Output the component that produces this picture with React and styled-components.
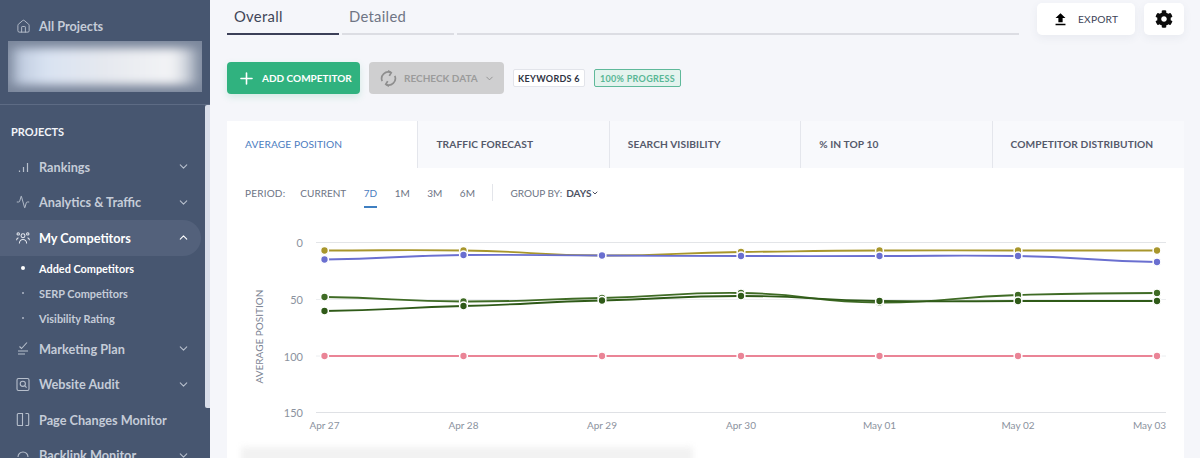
import React from 'react'
import styled, { createGlobalStyle } from 'styled-components'
import { House, Activity, ChevronDown, ChevronUp, Plus } from 'lucide-react'
import { MdFileUpload } from 'react-icons/md'
import { FaCog } from 'react-icons/fa'

const GlobalStyle = createGlobalStyle`
  html, body {
    margin: 0;
    height: 458px;
    overflow: hidden;
    background: #f5f6fa;
    font-family: Lato, "Open Sans", sans-serif;
  }
  * { box-sizing: border-box; }
`

const Page = styled.div`
  display: flex;
  width: 1200px;
  height: 458px;
  overflow: hidden;
`

const Sidebar = styled.aside`
  position: relative;
  flex: 0 0 210px;
  height: 458px;
  overflow: hidden;
  background: #475670;
  color: #c5ccd8;
`

const SideTop = styled.div`
  height: 105px;
  padding: 17px 8px 0;
  border-bottom: 1px solid #5d6b84;
`

const AllProjects = styled.div`
  display: flex;
  align-items: center;
  gap: 8px;
  height: 18px;
  padding-left: 8px;
  font-size: 12.7px;
  font-weight: 700;
`

const BlurWrap = styled.div`
  height: 51px;
  margin-top: 6px;
  overflow: hidden;
  background: #7b879c;
`

const BlurBar = styled.div`
  width: 100%;
  height: 100%;
  background: linear-gradient(90deg, #bcc8dc 0%, #d9e3f2 18%, #e6e9ef 50%, #f3f4f6 88%, #a9b2c1 100%);
  filter: blur(7px);
  transform: scale(0.94, 0.72);
`

const SectionTitle = styled.div`
  padding: 20px 0 0 11px;
  height: 44px;
  font-size: 11px;
  font-weight: 700;
  line-height: 13px;
  color: #f2f4f8;
`

const NavItem = styled.div`
  display: flex;
  align-items: center;
  width: 201px;
  height: 35.6px;
  padding-left: 16px;
  padding-right: 11px;
  font-size: 12.7px;
  font-weight: 700;
  color: ${({ $active }) => ($active ? '#ffffff' : '#c5ccd8')};
  background: ${({ $active }) => ($active ? '#53617b' : 'transparent')};
  border-radius: ${({ $active }) => ($active ? '0 18px 18px 0' : '0')};
`

const NavIcon = styled.span`
  display: flex;
  justify-content: center;
  width: 14px;
  margin-right: 9px;
`

const NavLabel = styled.span`
  flex: 1;
`

const SubItem = styled.div`
  display: flex;
  align-items: center;
  height: 25px;
  padding-left: 21px;
  font-size: 10.9px;
  font-weight: 700;
  color: ${({ $active }) => ($active ? '#ffffff' : '#c5ccd8')};
`

const Dot = styled.span`
  flex: 0 0 auto;
  width: ${({ $active }) => ($active ? '4px' : '2px')};
  height: ${({ $active }) => ($active ? '4px' : '2px')};
  margin-left: ${({ $active }) => ($active ? '0' : '1px')};
  margin-right: ${({ $active }) => ($active ? '14px' : '15px')};
  border-radius: 50%;
  background: ${({ $active }) => ($active ? '#ffffff' : '#aeb7c6')};
`

const Scrollbar = styled.div`
  position: absolute;
  top: 105px;
  left: 205px;
  width: 5px;
  height: 303px;
  background: #d9deea;
  border-radius: 2px 0 0 2px;
`

const Main = styled.main`
  flex: 1;
  display: flex;
  flex-direction: column;
  padding-left: 17px;
  padding-right: 16px;
`

const TopRow = styled.div`
  display: flex;
  height: 62px;
`

const ViewTab = styled.div`
  flex: ${({ $grow }) => ($grow ? '1' : '0 0 auto')};
  width: ${({ $grow }) => ($grow ? 'auto' : '112px')};
  height: 35px;
  margin-right: 3px;
  padding: 6px 0 0 7px;
  font-size: 14.8px;
  line-height: 20px;
  letter-spacing: 0.3px;
  color: ${({ $active }) => ($active ? '#3f4557' : '#6f7585')};
  border-bottom: 2px solid ${({ $active }) => ($active ? '#3c4058' : '#dcdde3')};
`

const TopActions = styled.div`
  display: flex;
  gap: 9px;
  height: 32px;
  margin-top: 3px;
  margin-left: 15px;
`

const TopButton = styled.button`
  display: flex;
  align-items: center;
  justify-content: ${({ $wide }) => ($wide ? 'flex-start' : 'center')};
  gap: 9px;
  width: ${({ $wide }) => ($wide ? '98px' : '40px')};
  height: 32px;
  padding: 0 0 0 ${({ $wide }) => ($wide ? '15px' : '0')};
  border: 0;
  border-radius: 5px;
  background: #ffffff;
  box-shadow: 0 3px 8px rgba(70, 80, 120, 0.07);
  font-family: inherit;
  font-size: 10.2px;
  letter-spacing: 0.2px;
  color: #3c4356;
`

const ActionRow = styled.div`
  display: flex;
  align-items: center;
  height: 32px;
`

const Button = styled.button`
  display: flex;
  align-items: center;
  height: 32px;
  padding: 0;
  border: 0;
  border-radius: 4px;
  font-family: inherit;
  font-size: 10px;
  font-weight: 700;
  white-space: nowrap;
`

const AddButton = styled(Button)`
  width: 133px;
  padding-left: 10px;
  gap: 6px;
  color: #ffffff;
  background: #30b27f;
  box-shadow: 0 3px 7px rgba(48, 178, 127, 0.18);
`

const RecheckButton = styled(Button)`
  width: 135px;
  margin-left: 9px;
  padding-left: 11px;
  gap: 7px;
  color: #9b9b9b;
  background: #cfcfd0;
`

const Chip = styled.div`
  display: flex;
  align-items: center;
  justify-content: center;
  width: ${({ $w }) => $w}px;
  height: 18px;
  margin-left: 9px;
  border: 1px solid ${({ $green }) => ($green ? '#5fb99a' : '#e2e4ea')};
  border-radius: 2px;
  background: ${({ $green }) => ($green ? '#e4f3ee' : '#ffffff')};
  color: ${({ $green }) => ($green ? '#58b795' : '#2e3342')};
  font-size: 9px;
  font-weight: 700;
  letter-spacing: 0.3px;
`

const Card = styled.section`
  position: relative;
  flex: 1;
  margin-top: 27px;
  background: #ffffff;
`

const CardTabs = styled.div`
  display: grid;
  grid-template-columns: repeat(5, 1fr);
  height: 47px;
  background: #f8f9fc;
`

const CardTab = styled.div`
  display: flex;
  align-items: center;
  padding-left: 18px;
  padding-bottom: 2px;
  font-size: 10.2px;
  font-weight: ${({ $active }) => ($active ? 400 : 700)};
  letter-spacing: 0.1px;
  color: ${({ $active }) => ($active ? '#4b7cc0' : '#555a6b')};
  background: ${({ $active }) => ($active ? '#ffffff' : 'transparent')};
  border-right: ${({ $last }) => ($last ? '0' : '1px solid #e4e6ec')};
`

const PeriodRow = styled.div`
  display: flex;
  align-items: center;
  height: 51px;
  padding-left: 18px;
  padding-bottom: 2px;
  font-size: 10px;
  color: #6d7484;
`

const PeriodLabel = styled.span`
  margin-right: 15px;
  letter-spacing: 0.2px;
`

const PeriodItem = styled.span`
  position: relative;
  margin-right: 17.5px;
  color: ${({ $active }) => ($active ? '#4b7cc0' : '#6d7484')};

  &::after {
    content: '';
    display: ${({ $active }) => ($active ? 'block' : 'none')};
    position: absolute;
    left: 0;
    right: 0;
    bottom: -9px;
    height: 2px;
    background: #3f7fc1;
  }
`

const Separator = styled.span`
  width: 1px;
  height: 17px;
  margin: 0 17px 0 0;
  background: #e3e5ea;
`

const GroupValue = styled.span`
  display: flex;
  align-items: center;
  margin-left: 4px;
  font-weight: 700;
  color: #4c5162;
`

const ChartBox = styled.div`
  height: 233px;
  margin-top: 6px;
`

const BlurStrip = styled.div`
  position: absolute;
  left: 14px;
  top: 326px;
  width: 452px;
  height: 24px;
  background: #f2f2f2;
  filter: blur(3px);
`

const xs = [324.5, 463.5, 602, 741, 879.5, 1018, 1157]

const series = [
  { color: '#a8962c', ys: [250.5, 250.5, 255.5, 252, 250.5, 250.5, 250.5] },
  { color: '#6a6fd0', ys: [259.5, 255, 255.5, 256, 256, 256, 262] },
  { color: '#3f6b25', ys: [297, 301.5, 298, 293, 302.5, 295, 293] },
  { color: '#2f5a18', ys: [311, 306, 300.5, 296, 301, 301, 301] },
  { color: '#ea8496', ys: [356, 356, 356, 356, 356, 356, 356] },
]

const linePath = (ys) => {
  let d = `M${xs[0]} ${ys[0]}`
  for (let i = 0; i < xs.length - 1; i++) {
    const before = ys[Math.max(i - 1, 0)]
    const after = ys[Math.min(i + 2, ys.length - 1)]
    const c1 = ys[i] + (ys[i + 1] - before) / 6
    const c2 = ys[i + 1] - (after - ys[i]) / 6
    const mid = (xs[i] + xs[i + 1]) / 2
    d += ` C${mid} ${c1} ${mid} ${c2} ${xs[i + 1]} ${ys[i + 1]}`
  }
  return d
}

const dates = ['Apr 27', 'Apr 28', 'Apr 29', 'Apr 30', 'May 01', 'May 02', 'May 03']
const ticks = [[0, 242.5], [50, 299.5], [100, 356], [150, 412.5]]

// chart is drawn in page coordinates, offset by the box origin
const Chart = () => (
  <svg width="957" height="233" viewBox="227 225 957 233" style={{ display: 'block' }}>
    <line x1="316" x2="1166" y1="242.5" y2="242.5" stroke="#e3e5e8" />
    <line x1="316" x2="1166" y1="299.5" y2="299.5" stroke="#eceef0" />
    <line x1="316" x2="1166" y1="356" y2="356" stroke="#eceef0" />
    <line x1="316" x2="1166" y1="412.5" y2="412.5" stroke="#dfe1e5" />
    {ticks.map(([label, y]) => (
      <text key={label} x="303" y={y + 4.5} textAnchor="end" fontSize="11" fill="#8b929e">{label}</text>
    ))}
    <text
      transform="translate(263 336.5) rotate(-90)"
      textAnchor="middle"
      fontSize="10"
      fill="#7c8494"
    >
      AVERAGE POSITION
    </text>
    {dates.map((date, i) => (
      <text
        key={date}
        x={i === 6 ? 1166 : xs[i]}
        y="429"
        textAnchor={i === 6 ? 'end' : 'middle'}
        fontSize="10"
        fill="#8b929e"
      >
        {date}
      </text>
    ))}
    {series.map(({ color, ys }) => (
      <g key={color}>
        <path d={linePath(ys)} fill="none" stroke={color} strokeWidth="1.8" />
        {ys.map((y, i) => (
          <circle key={i} cx={xs[i]} cy={y} r="3.9" fill={color} stroke="#ffffff" strokeWidth="1.5" />
        ))}
      </g>
    ))}
  </svg>
)

const BarsIcon = () => (
  <svg width="13" height="13" viewBox="0 0 13 13" fill="none" stroke="#b7bfcc" strokeWidth="1.2">
    <path d="M2.5 12v-1.5M6.5 12V7M10.5 12V3" />
  </svg>
)

const PlanIcon = () => (
  <svg width="12" height="15" viewBox="0 0 12 15" fill="none" stroke="#b7bfcc" strokeWidth="1.1">
    <path d="M2.5 5.5l2 2L10 1.5M1 10h10M1 13h7" />
  </svg>
)

const AuditIcon = () => (
  <svg width="14" height="15" viewBox="0 0 14 15" fill="none" stroke="#b7bfcc" strokeWidth="1.1">
    <rect x="1" y="1.5" width="12" height="12" rx="1.5" />
    <circle cx="6.8" cy="6.8" r="2.6" />
    <path d="M8.8 8.8l1.8 1.8" />
  </svg>
)

const PagesIcon = () => (
  <svg width="14" height="15" viewBox="0 0 14 15" fill="none" stroke="#b7bfcc" strokeWidth="1.1">
    <path d="M6.5 1.5H2.3a1 1 0 0 0-1 1v10a1 1 0 0 0 1 1h4.2zM9.5 1.5h2.2a1 1 0 0 1 1 1v10a1 1 0 0 1-1 1H9.5" />
  </svg>
)

const LinkIcon = () => (
  <svg width="14" height="15" viewBox="0 0 14 15" fill="none" stroke="#b7bfcc" strokeWidth="1.1">
    <path d="M2 9a5 5 0 0 1 10 0" />
  </svg>
)

const TeamIcon = () => (
  <svg width="15" height="14" viewBox="0 0 15 14" fill="none" stroke="#e6e9ef" strokeWidth="1.1">
    <circle cx="7.5" cy="4.6" r="2.1" />
    <path d="M3.6 13a3.9 4.4 0 0 1 7.8 0" />
    <circle cx="2.4" cy="2.6" r="1.3" />
    <circle cx="12.6" cy="2.6" r="1.3" />
    <path d="M0.6 9.4a2.8 2.8 0 0 1 2-2.6M14.4 9.4a2.8 2.8 0 0 0-2-2.6" />
  </svg>
)

const SyncIcon = () => (
  <svg width="17" height="17" viewBox="0 0 17 17" fill="none" stroke="#8e8e8e" strokeWidth="1.7">
    <path d="M2.2 11.2A6.6 6.6 0 0 1 11 2.6" />
    <path d="M8 0.8l3.2 1.9-1.9 3.2" />
    <path d="M14.8 5.8A6.6 6.6 0 0 1 6 14.4" />
    <path d="M9 16.2l-3.2-1.9 1.9-3.2" />
  </svg>
)

const Chevron = () => <ChevronDown size={13} color="#b7bfcc" strokeWidth={2} />

export default function App() {
  return (
    <Page>
      <GlobalStyle />
      <Sidebar>
        <SideTop>
          <AllProjects>
            <House size={15} color="#b7bfcc" strokeWidth={1.5} />
            All Projects
          </AllProjects>
          <BlurWrap>
            <BlurBar />
          </BlurWrap>
        </SideTop>
        <SectionTitle>PROJECTS</SectionTitle>
        <NavItem>
          <NavIcon><BarsIcon /></NavIcon>
          <NavLabel>Rankings</NavLabel>
          <Chevron />
        </NavItem>
        <NavItem>
          <NavIcon><Activity size={14} color="#b7bfcc" strokeWidth={1.6} /></NavIcon>
          <NavLabel>Analytics &amp; Traffic</NavLabel>
          <Chevron />
        </NavItem>
        <NavItem $active>
          <NavIcon><TeamIcon /></NavIcon>
          <NavLabel>My Competitors</NavLabel>
          <ChevronUp size={13} color="#ffffff" strokeWidth={2} />
        </NavItem>
        <SubItem $active><Dot $active />Added Competitors</SubItem>
        <SubItem><Dot />SERP Competitors</SubItem>
        <SubItem><Dot />Visibility Rating</SubItem>
        <NavItem>
          <NavIcon><PlanIcon /></NavIcon>
          <NavLabel>Marketing Plan</NavLabel>
          <Chevron />
        </NavItem>
        <NavItem>
          <NavIcon><AuditIcon /></NavIcon>
          <NavLabel>Website Audit</NavLabel>
          <Chevron />
        </NavItem>
        <NavItem>
          <NavIcon><PagesIcon /></NavIcon>
          <NavLabel>Page Changes Monitor</NavLabel>
        </NavItem>
        <NavItem>
          <NavIcon><LinkIcon /></NavIcon>
          <NavLabel>Backlink Monitor</NavLabel>
          <Chevron />
        </NavItem>
        <Scrollbar />
      </Sidebar>
      <Main>
        <TopRow>
          <ViewTab $active>Overall</ViewTab>
          <ViewTab>Detailed</ViewTab>
          <ViewTab $grow />
          <TopActions>
            <TopButton $wide>
              <MdFileUpload size={17} color="#000000" />
              EXPORT
            </TopButton>
            <TopButton>
              <FaCog size={18} color="#0c0c0c" />
            </TopButton>
          </TopActions>
        </TopRow>
        <ActionRow>
          <AddButton>
            <Plus size={19} strokeWidth={2} />
            ADD COMPETITOR
          </AddButton>
          <RecheckButton>
            <SyncIcon />
            RECHECK DATA
            <ChevronDown size={11} color="#8f8f8f" style={{ marginLeft: -1 }} />
          </RecheckButton>
          <Chip $w={72}>KEYWORDS 6</Chip>
          <Chip $w={87} $green>100% PROGRESS</Chip>
        </ActionRow>
        <Card>
          <CardTabs>
            <CardTab $active>AVERAGE POSITION</CardTab>
            <CardTab>TRAFFIC FORECAST</CardTab>
            <CardTab>SEARCH VISIBILITY</CardTab>
            <CardTab>% IN TOP 10</CardTab>
            <CardTab $last>COMPETITOR DISTRIBUTION</CardTab>
          </CardTabs>
          <PeriodRow>
            <PeriodLabel>PERIOD:</PeriodLabel>
            <PeriodItem>CURRENT</PeriodItem>
            <PeriodItem $active>7D</PeriodItem>
            <PeriodItem>1M</PeriodItem>
            <PeriodItem>3M</PeriodItem>
            <PeriodItem>6M</PeriodItem>
            <Separator />
            GROUP BY:
            <GroupValue>
              DAYS
              <ChevronDown size={8} strokeWidth={3} />
            </GroupValue>
          </PeriodRow>
          <ChartBox>
            <Chart />
          </ChartBox>
          <BlurStrip />
        </Card>
      </Main>
    </Page>
  )
}
